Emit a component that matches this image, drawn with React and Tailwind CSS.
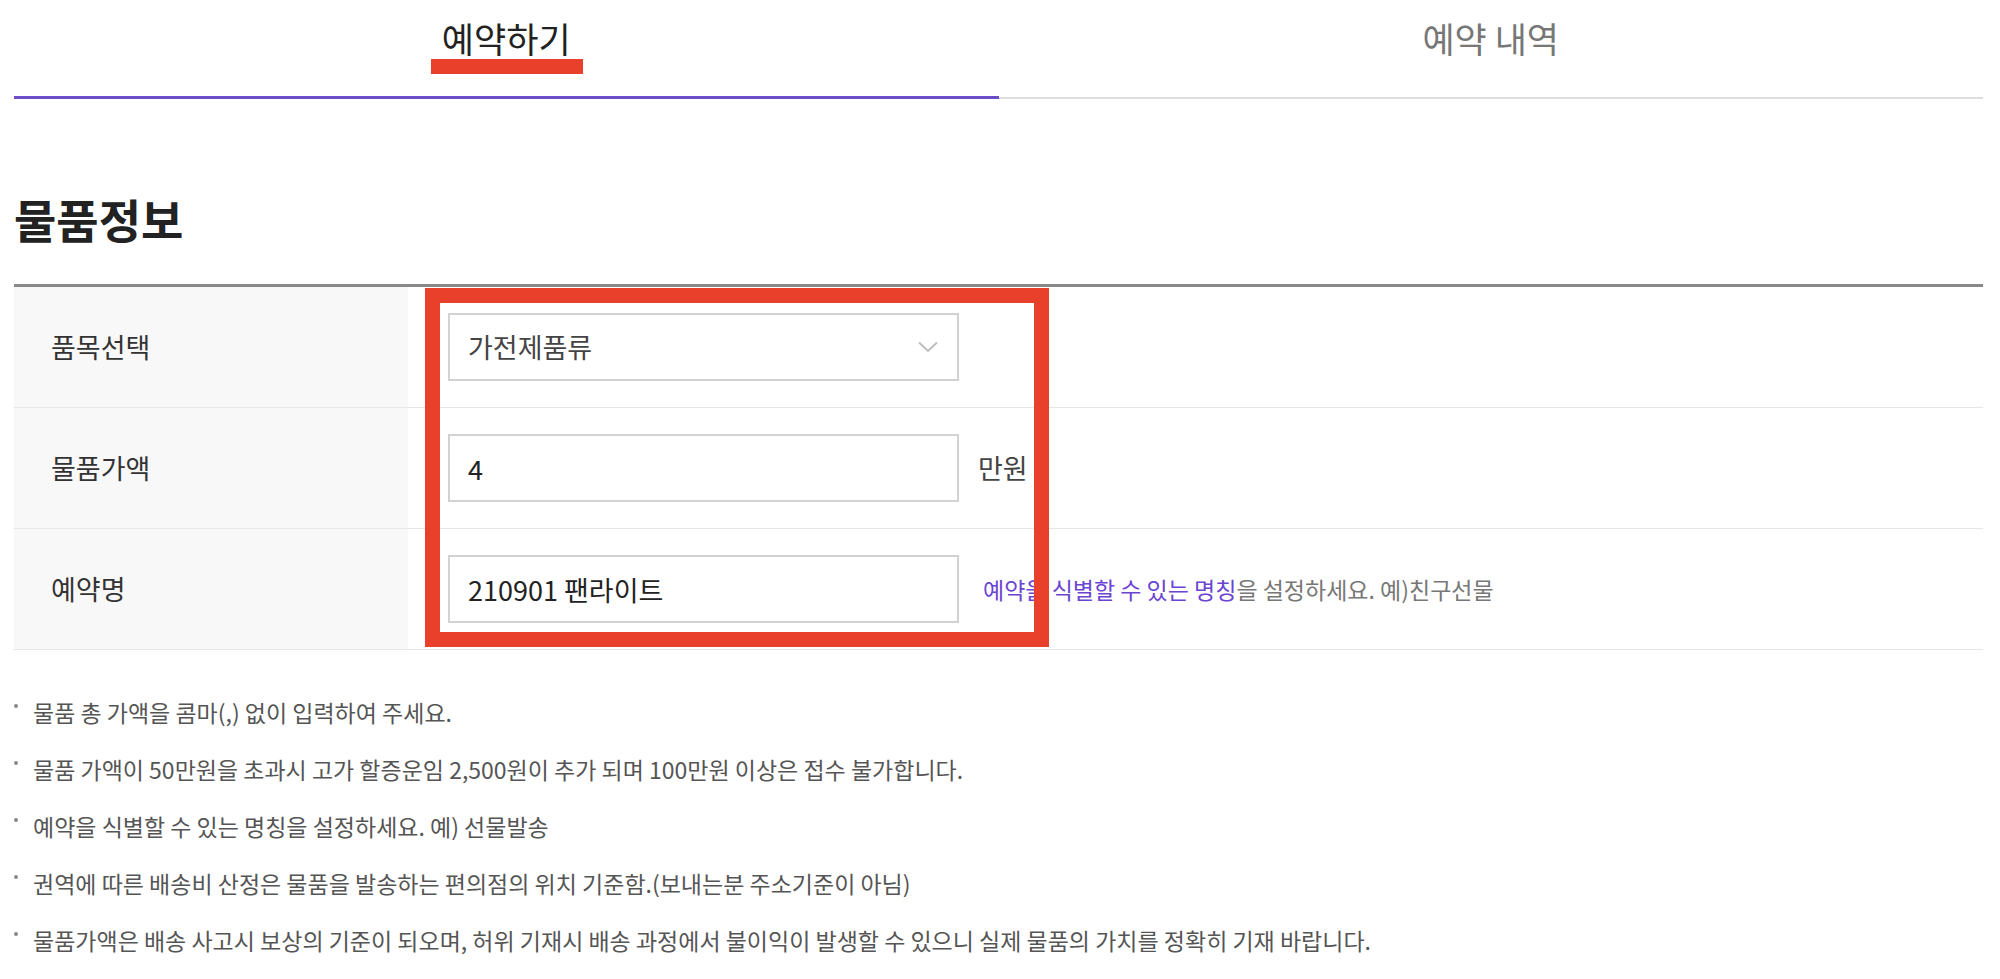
import React from "react";

const notes = [
  "물품 총 가액을 콤마(,) 없이 입력하여 주세요.",
  "물품 가액이 50만원을 초과시 고가 할증운임 2,500원이 추가 되며 100만원 이상은 접수 불가합니다.",
  "예약을 식별할 수 있는 명칭을 설정하세요. 예) 선물발송",
  "권역에 따른 배송비 산정은 물품을 발송하는 편의점의 위치 기준함.(보내는분 주소기준이 아님)",
  "물품가액은 배송 사고시 보상의 기준이 되오며, 허위 기재시 배송 과정에서 불이익이 발생할 수 있으니 실제 물품의 가치를 정확히 기재 바랍니다.",
];

function Row({ label, children }) {
  return (
    <div className="flex h-[121px] border-b border-[#e6e6e6]">
      <div className="w-[394px] shrink-0 bg-[#f8f8f8] pl-[37px] flex items-center text-[27px] text-[#333]">
        {label}
      </div>
      <div className="flex-1 pl-[40px] flex items-center">{children}</div>
    </div>
  );
}

export default function App() {
  return (
    <div className="relative w-[2000px] h-[979px] bg-white overflow-hidden font-['Noto_Sans_CJK_KR','Noto_Sans',sans-serif]">
      <div className="ml-[14px] w-[1969px]">
        {/* Tabs */}
        <div className="relative flex items-end h-[99px]">
          <div className="flex-1 h-[99px] border-b-[3px] border-[#6d4ec8] flex justify-center pt-[20px]">
            <span className="text-[35px] leading-none text-[#222]">예약하기</span>
          </div>
          <div className="flex-1 h-[99px] border-b-2 border-[#dddddd] flex justify-center pt-[20px]">
            <span className="text-[35px] leading-none text-[#777]">예약 내역</span>
          </div>
          <div className="absolute left-[417px] top-[59px] w-[152px] h-[15px] bg-[#e8402b]" />
        </div>

        {/* Heading */}
        <h2 className="mt-[96px] text-[46px] leading-none font-bold text-[#222]">
          물품정보
        </h2>

        {/* Table */}
        <div className="mt-[43px] border-t-[3px] border-[#888]">
          <Row label="품목선택">
            <div className="w-[511px] h-[68px] border-2 border-[#d2d2d2] flex items-center justify-between pl-[18px] pr-[19px]">
              <span className="text-[27px] text-[#444]">가전제품류</span>
              <svg width="20" height="12" viewBox="0 0 20 12" fill="none">
                <path d="M1 1.5 L10 10 L19 1.5" stroke="#bcbcbc" strokeWidth="1.8" />
              </svg>
            </div>
          </Row>
          <Row label="물품가액">
            <input
              readOnly
              defaultValue="4"
              className="w-[511px] h-[68px] border-2 border-[#d2d2d2] pl-[18px] text-[27px] text-[#222] outline-none"
            />
            <span className="ml-[19px] text-[27px] text-[#444]">만원</span>
          </Row>
          <Row label="예약명">
            <input
              readOnly
              defaultValue="210901 팬라이트"
              className="w-[511px] h-[68px] border-2 border-[#d2d2d2] pl-[18px] text-[27px] text-[#222] outline-none"
            />
            <span className="ml-[24px] text-[23px] text-[#777]">
              <span className="text-[#6a45d1]">예약을 식별할 수 있는 명칭</span>을 설정하세요. 예)친구선물
            </span>
          </Row>
        </div>

        {/* Notes */}
        <ul className="mt-[34px]">
          {notes.map((n) => (
            <li key={n} className="flex items-start h-[57px] leading-[57px] text-[23px] text-[#555]">
              <span className="mt-[20px] mr-[15px] w-[4px] h-[4px] rounded-full bg-[#888] shrink-0" />
              <span>{n}</span>
            </li>
          ))}
        </ul>
      </div>

      {/* Red annotation box */}
      <div className="absolute left-[425px] top-[288px] w-[624px] h-[359px] border-[15px] border-[#e8402b]" />
    </div>
  );
}
